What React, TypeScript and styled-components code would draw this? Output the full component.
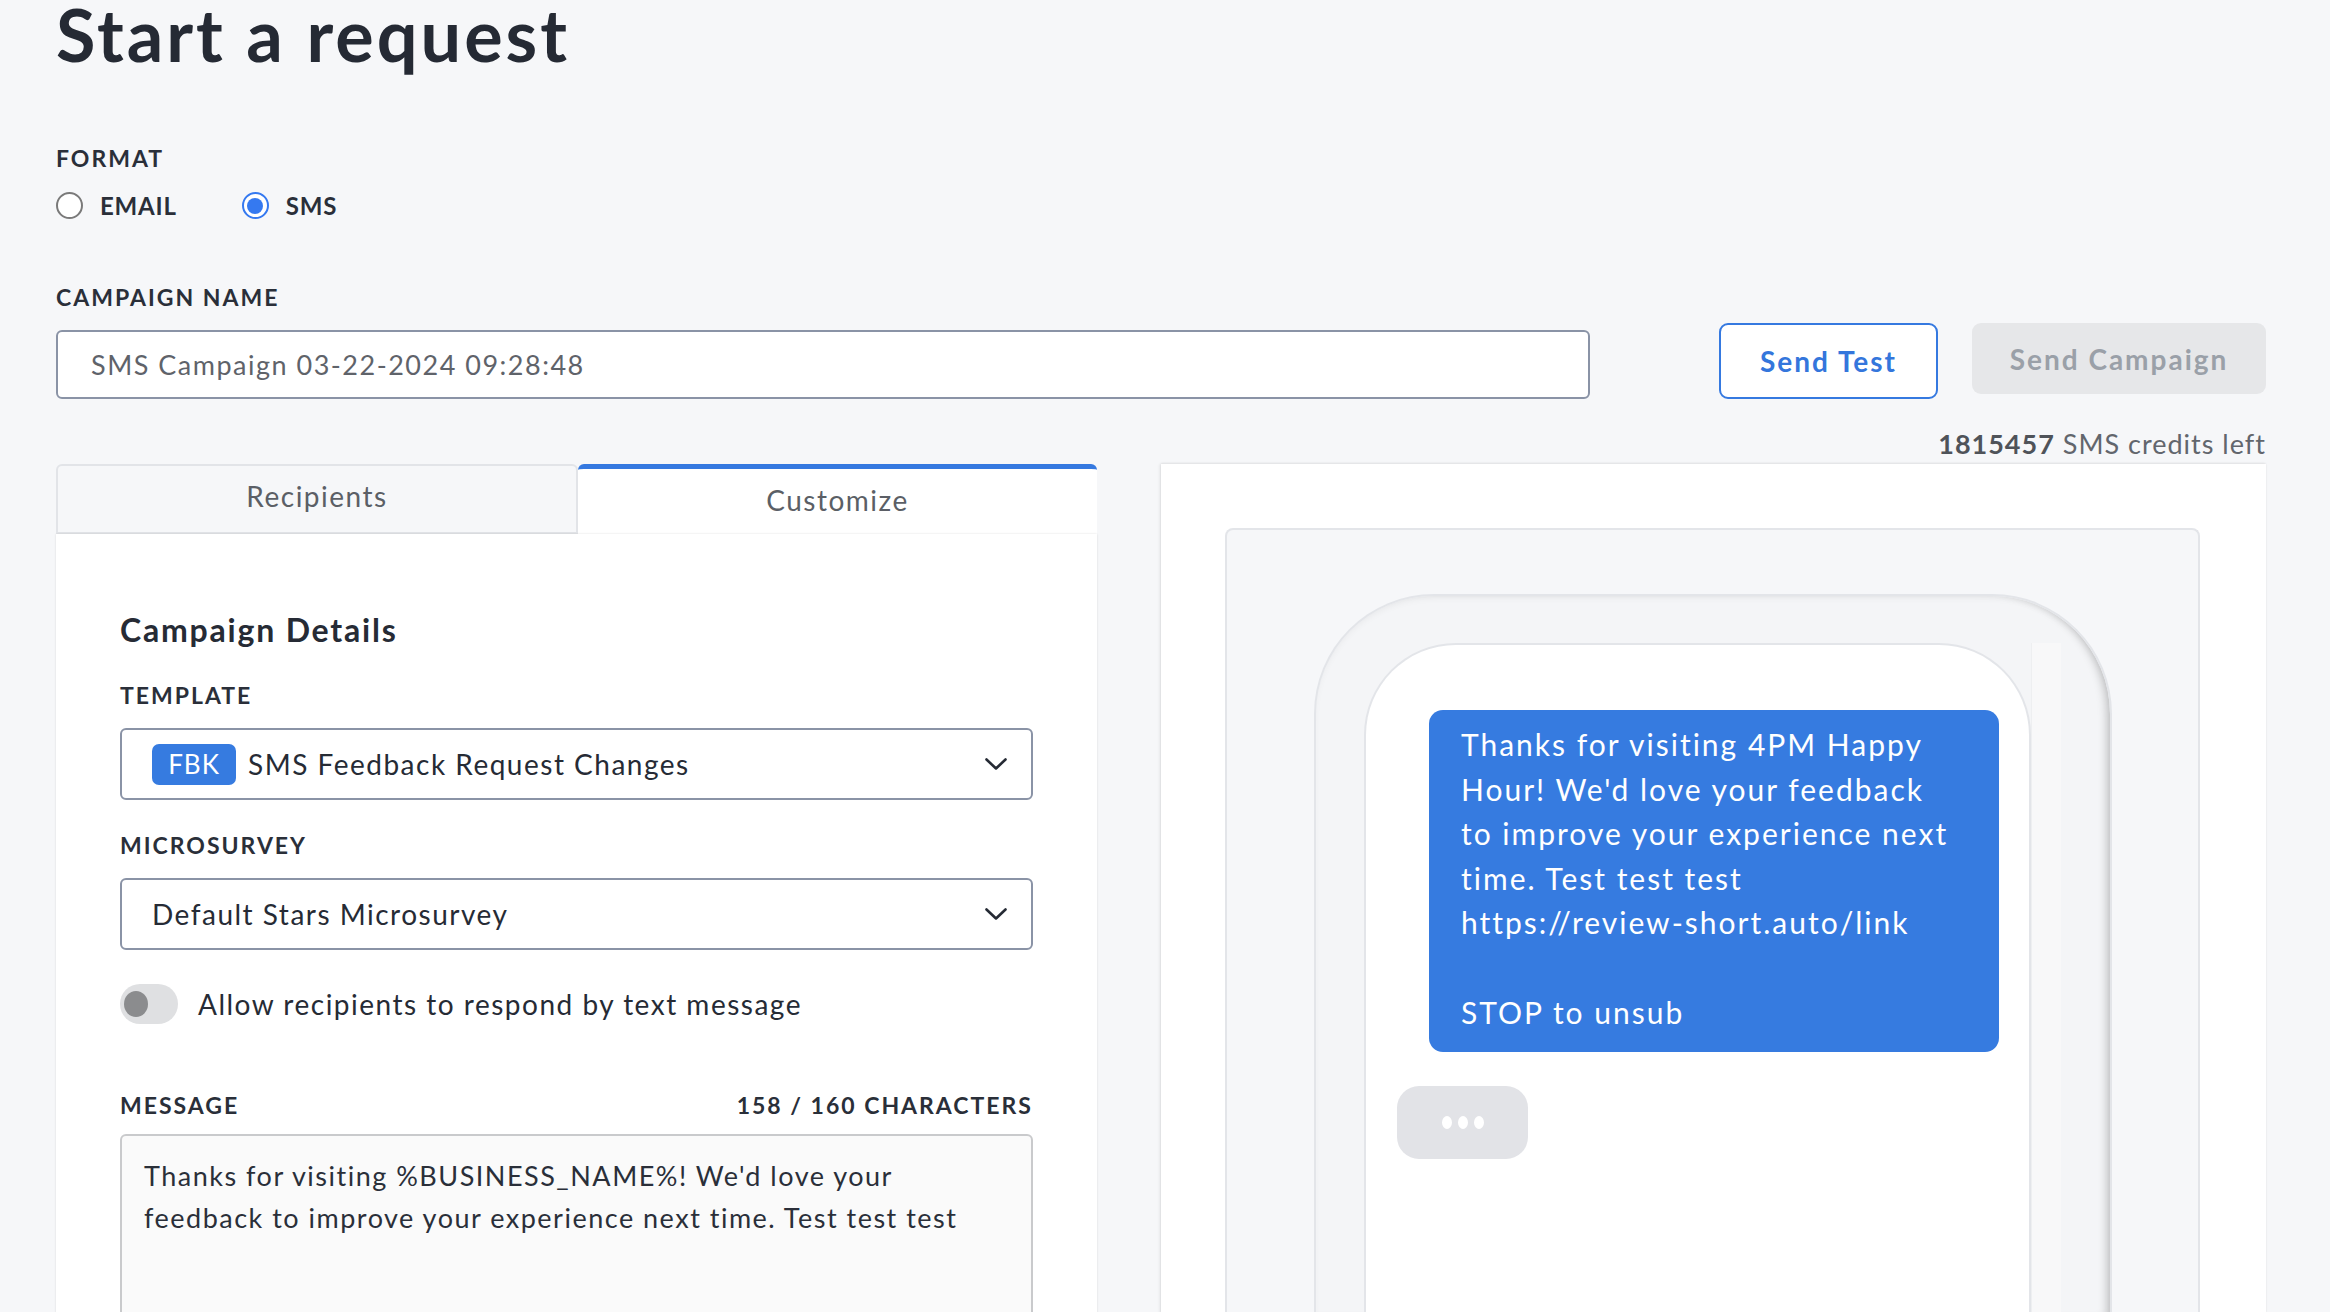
import { styled, createGlobalStyle } from "styled-components";

const GlobalStyle = createGlobalStyle`
  html, body {
    margin: 0;
    padding: 0;
    background: #f6f7f9;
  }
  body {
    font-family: Lato, "Open Sans", "Liberation Sans", sans-serif;
    color: #262b35;
    overflow: hidden;
  }
  * {
    box-sizing: border-box;
  }
`;

const Page = styled.div`
  width: 2330px;
  height: 1312px;
  padding: 0 64px 0 56px;
  overflow: hidden;
`;

const Title = styled.h1`
  margin: 0;
  font-size: 72px;
  line-height: 68px;
  font-weight: 700;
  color: #252a34;
  letter-spacing: 3px;
`;

const Label = styled.div<{ $top?: number }>`
  margin-top: ${(p) => p.$top ?? 0}px;
  font-size: 23px;
  line-height: 26px;
  font-weight: 700;
  letter-spacing: 2px;
  text-transform: uppercase;
  color: #2a2f39;
`;

const RadioRow = styled.div`
  display: flex;
  align-items: center;
  gap: 65px;
  margin-top: 20px;
`;

const RadioOption = styled.label`
  display: flex;
  align-items: center;
  gap: 17px;
  font-size: 24px;
  font-weight: 700;
  letter-spacing: 0.8px;
  color: #2a2f39;
`;

const RadioCircle = styled.span<{ $checked?: boolean }>`
  width: 27px;
  height: 27px;
  border-radius: 50%;
  background: #fff;
  border: ${(p) => (p.$checked ? "2.5px solid #3579f0" : "2px solid #7a7a7a")};
  display: flex;
  align-items: center;
  justify-content: center;
  &::after {
    content: "";
    display: ${(p) => (p.$checked ? "block" : "none")};
    width: 16px;
    height: 16px;
    border-radius: 50%;
    background: #3579f0;
  }
`;

const CampaignRow = styled.div`
  margin-top: 64px;
  display: flex;
  align-items: flex-start;
  justify-content: space-between;
`;

const NameColumn = styled.div`
  width: 1534px;
`;

const TextInput = styled.div`
  margin-top: 20px;
  height: 69px;
  border: 2px solid #8a93a6;
  border-radius: 6px;
  background: #fff;
  padding: 0 33px;
  display: flex;
  align-items: center;
  font-size: 27px;
  letter-spacing: 1.5px;
  color: #5f636a;
`;

const Actions = styled.div`
  display: flex;
  align-items: flex-start;
  gap: 34px;
  margin-top: 39px;
`;

const Button = styled.button<{ $variant: "outline" | "disabled" }>`
  font-family: inherit;
  font-size: 28px;
  font-weight: 700;
  letter-spacing: 2px;
  border-radius: 9px;
  cursor: pointer;
  ${(p) =>
    p.$variant === "outline"
      ? `
    width: 219px;
    height: 76px;
    background: #fff;
    color: #3476dc;
    border: 2px solid #3579e0;
  `
      : `
    width: 294px;
    height: 71px;
    background: #e6e7e9;
    color: #9aa0a8;
    border: 0;
  `}
`;

const Credits = styled.div`
  margin-top: 29px;
  text-align: right;
  font-size: 27px;
  line-height: 32px;
  letter-spacing: 1px;
  color: #62666d;
  b {
    color: #4f5359;
    font-weight: 700;
  }
`;

const Columns = styled.div`
  margin-top: 4px;
  display: grid;
  grid-template-columns: 1041px 1105px;
  gap: 64px;
`;

const LeftPanel = styled.div`
  display: flex;
  flex-direction: column;
`;

const Tabs = styled.div`
  display: grid;
  grid-template-columns: 522px 1fr;
  height: 70px;
`;

const Tab = styled.div<{ $active?: boolean }>`
  display: flex;
  align-items: center;
  justify-content: center;
  font-size: 28px;
  letter-spacing: 1.5px;
  color: #5b5f66;
  border-radius: 6px 6px 0 0;
  padding-bottom: 7px;
  ${(p) =>
    p.$active
      ? `
    background: #fff;
    border-top: 5px solid #3579e0;
    padding-bottom: 4px;
  `
      : `
    background: #f6f7f9;
    border: 2px solid #e2e4e8;
  `}
`;

const PanelBody = styled.div`
  background: #fff;
  height: 900px;
  padding: 78px 64px 0;
  box-shadow: 0 0 2px rgba(0, 0, 0, 0.12);
`;

const SectionTitle = styled.h2`
  margin: 0;
  font-size: 32px;
  line-height: 36px;
  font-weight: 700;
  letter-spacing: 1.8px;
  color: #262b35;
`;

const Select = styled.div`
  margin-top: 20px;
  height: 72px;
  border: 2px solid #8a93a6;
  border-radius: 6px;
  background: #fff;
  padding: 0 24px 0 30px;
  display: flex;
  align-items: center;
  font-size: 28px;
  letter-spacing: 1.5px;
  color: #262b35;
`;

const SelectText = styled.span`
  flex: 1;
  display: flex;
  align-items: center;
`;

const Badge = styled.span`
  display: inline-flex;
  align-items: center;
  justify-content: center;
  width: 84px;
  height: 41px;
  margin-right: 12px;
  border-radius: 7px;
  background: #367be0;
  color: #fff;
  font-size: 26px;
  letter-spacing: 1px;
`;

const ToggleRow = styled.div`
  margin-top: 34px;
  display: flex;
  align-items: center;
  gap: 20px;
  font-size: 28px;
  letter-spacing: 1.5px;
  color: #262b35;
`;

const Toggle = styled.span`
  position: relative;
  width: 58px;
  height: 40px;
  border-radius: 20px;
  background: #dfe0e2;
  &::after {
    content: "";
    position: absolute;
    left: 4px;
    top: 7px;
    width: 24px;
    height: 26px;
    border-radius: 50%;
    background: #8b8c8e;
  }
`;

const LabelRow = styled.div`
  margin-top: 68px;
  display: flex;
  justify-content: space-between;
`;

const MessageBox = styled.div`
  margin-top: 16px;
  height: 260px;
  border: 2px solid #c9cacc;
  border-radius: 6px;
  background: #fafafa;
  padding: 19px 10px 19px 22px;
  font-size: 27px;
  line-height: 42px;
  letter-spacing: 1.5px;
  color: #2a2f39;
  white-space: pre-line;
`;

const RightPanel = styled.div`
  background: #fff;
  height: 850px;
  padding: 64px 66px 0 64px;
  box-shadow: -1px 0 3px rgba(0, 0, 0, 0.1), 0 -1px 2px rgba(0, 0, 0, 0.05);
`;

const PreviewBox = styled.div`
  height: 100%;
  background: #f6f7f9;
  border: 2px solid #e3e5e9;
  border-bottom: 0;
  border-radius: 8px 8px 0 0;
  padding: 64px 86px 0 87px;
`;

const Phone = styled.div`
  height: 100%;
  background: #f4f5f7;
  border: 2px solid #e3e5e9;
  border-bottom: 0;
  border-radius: 120px 120px 0 0;
  padding: 47px 49px 0 48px;
  display: flex;
  box-shadow: inset -9px 0 10px -6px rgba(0, 0, 0, 0.22),
    inset 0 4px 8px -4px rgba(0, 0, 0, 0.08);
`;

const Screen = styled.div`
  flex: 1;
  background: #fff;
  border: 2px solid #e3e5e9;
  border-bottom: 0;
  border-radius: 92px 92px 0 0;
  padding: 65px 30px 0 31px;
  display: flex;
  flex-direction: column;
`;

const ScrollTrack = styled.div`
  width: 30px;
  background: #f8f8f9;
  border-left: 1px solid #eeeff1;
`;

const Bubble = styled.div`
  align-self: flex-end;
  width: 570px;
  background: #367be0;
  color: #fff;
  border-radius: 14px;
  padding: 12px 16px 18px 32px;
  font-size: 30px;
  line-height: 44.6px;
  letter-spacing: 2px;
  white-space: pre-line;
`;

const Typing = styled.div`
  margin-top: 34px;
  width: 131px;
  height: 73px;
  border-radius: 22px;
  background: #e2e3e7;
  display: flex;
  align-items: center;
  justify-content: center;
  gap: 6px;
`;

const Dot = styled.span`
  width: 10px;
  height: 13px;
  border-radius: 50%;
  background: #fff;
`;

const Chevron = () => (
  <svg width="22" height="12" viewBox="0 0 22 12" fill="none">
    <path d="M1.5 1.5 L11 10.5 L20.5 1.5" stroke="#252a34" strokeWidth="2.6" strokeLinecap="round" strokeLinejoin="round" />
  </svg>
);

const smsText = `Thanks for visiting 4PM Happy
Hour! We'd love your feedback
to improve your experience next
time. Test test test
https://review-short.auto/link

STOP to unsub`;

const messageText = `Thanks for visiting %BUSINESS_NAME%! We'd love your
feedback to improve your experience next time. Test test test`;

export default function App() {
  return (
    <>
      <GlobalStyle />
      <Page>
        <Title>Start a request</Title>

        <Label $top={77}>Format</Label>
        <RadioRow>
          <RadioOption>
            <RadioCircle />
            EMAIL
          </RadioOption>
          <RadioOption>
            <RadioCircle $checked />
            SMS
          </RadioOption>
        </RadioRow>

        <CampaignRow>
          <NameColumn>
            <Label>Campaign Name</Label>
            <TextInput>SMS Campaign 03-22-2024 09:28:48</TextInput>
          </NameColumn>
          <Actions>
            <Button $variant="outline">Send Test</Button>
            <Button $variant="disabled">Send Campaign</Button>
          </Actions>
        </CampaignRow>

        <Credits>
          <b>1815457</b> SMS credits left
        </Credits>

        <Columns>
          <LeftPanel>
            <Tabs>
              <Tab>Recipients</Tab>
              <Tab $active>Customize</Tab>
            </Tabs>
            <PanelBody>
              <SectionTitle>Campaign Details</SectionTitle>

              <Label $top={34}>Template</Label>
              <Select>
                <SelectText>
                  <Badge>FBK</Badge>
                  SMS Feedback Request Changes
                </SelectText>
                <Chevron />
              </Select>

              <Label $top={32}>Microsurvey</Label>
              <Select>
                <SelectText>Default Stars Microsurvey</SelectText>
                <Chevron />
              </Select>

              <ToggleRow>
                <Toggle />
                Allow recipients to respond by text message
              </ToggleRow>

              <LabelRow>
                <Label>Message</Label>
                <Label>158 / 160 Characters</Label>
              </LabelRow>
              <MessageBox>{messageText}</MessageBox>
            </PanelBody>
          </LeftPanel>

          <RightPanel>
            <PreviewBox>
              <Phone>
                <Screen>
                  <Bubble>{smsText}</Bubble>
                  <Typing>
                    <Dot />
                    <Dot />
                    <Dot />
                  </Typing>
                </Screen>
                <ScrollTrack />
              </Phone>
            </PreviewBox>
          </RightPanel>
        </Columns>
      </Page>
    </>
  );
}
